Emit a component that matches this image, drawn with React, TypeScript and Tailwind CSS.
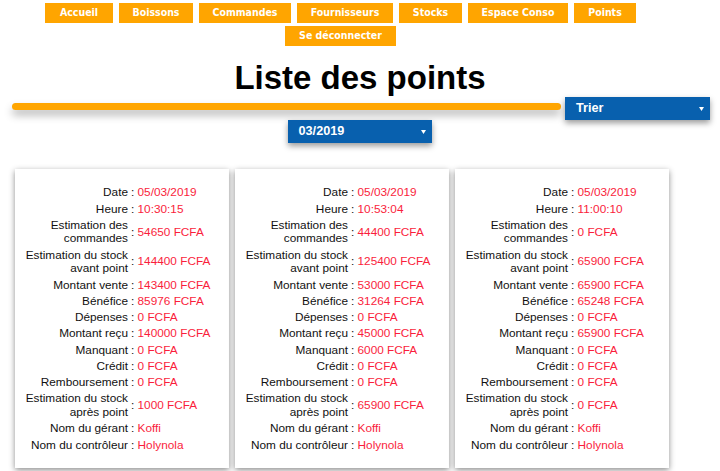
import React from "react";

type Row = { label: React.ReactNode; value: string; two?: boolean };

const navRow1 = [
  { t: "Accueil", w: "w-[68px]" },
  { t: "Boissons", w: "w-[74px]" },
  { t: "Commandes", w: "w-[92px]" },
  { t: "Fournisseurs", w: "w-[96px]" },
  { t: "Stocks", w: "w-[63px]" },
  { t: "Espace Conso", w: "w-[100px]" },
  { t: "Points", w: "w-[62px]" },
];

function mk(v: string[]): Row[] {
  return [
    { label: "Date", value: v[0] },
    { label: "Heure", value: v[1] },
    { label: <>Estimation des<br />commandes</>, value: v[2], two: true },
    { label: <>Estimation du stock<br />avant point</>, value: v[3], two: true },
    { label: "Montant vente", value: v[4] },
    { label: "Bénéfice", value: v[5] },
    { label: "Dépenses", value: v[6] },
    { label: "Montant reçu", value: v[7] },
    { label: "Manquant", value: v[8] },
    { label: "Crédit", value: v[9] },
    { label: "Remboursement", value: v[10] },
    { label: <>Estimation du stock<br />après point</>, value: v[11], two: true },
    { label: "Nom du gérant", value: v[12] },
    { label: "Nom du contrôleur", value: v[13] },
  ];
}

const cards: Row[][] = [
  mk(["05/03/2019", "10:30:15", "54650 FCFA", "144400 FCFA", "143400 FCFA", "85976 FCFA", "0 FCFA", "140000 FCFA", "0 FCFA", "0 FCFA", "0 FCFA", "1000 FCFA", "Koffi", "Holynola"]),
  mk(["05/03/2019", "10:53:04", "44400 FCFA", "125400 FCFA", "53000 FCFA", "31264 FCFA", "0 FCFA", "45000 FCFA", "6000 FCFA", "0 FCFA", "0 FCFA", "65900 FCFA", "Koffi", "Holynola"]),
  mk(["05/03/2019", "11:00:10", "0 FCFA", "65900 FCFA", "65900 FCFA", "65248 FCFA", "0 FCFA", "65900 FCFA", "0 FCFA", "0 FCFA", "0 FCFA", "0 FCFA", "Koffi", "Holynola"]),
];

function NavBtn({ t, w }: { t: string; w: string }) {
  return (
    <div
      className={`${w} h-[20px] bg-[#ffa500] text-white font-bold text-[10.5px] font-stretch-condensed font-['DejaVu_Sans_Condensed','DejaVu_Sans',sans-serif] flex items-center justify-center whitespace-nowrap`}
    >
      {t}
    </div>
  );
}

function Arrow() {
  return (
    <svg width="5" height="4" viewBox="0 0 5 4" className="block">
      <path d="M0 0 L5 0 L2.5 4 Z" fill="white" />
    </svg>
  );
}

function Select({ text, w }: { text: string; w: string }) {
  return (
    <div
      className={`${w} h-[23px] bg-[#0860ae] text-white font-bold text-[12.7px] font-['Liberation_Sans',Arial,sans-serif] flex items-center justify-between pl-[11px] pr-[6px] shadow-[0_3px_6px_rgba(0,0,0,0.4)]`}
    >
      <span>{text}</span>
      <Arrow />
    </div>
  );
}

function Card({ rows }: { rows: Row[] }) {
  return (
    <div className="w-[214px] h-[299px] bg-white shadow-[0_2px_6px_rgba(0,0,0,0.45)] pt-[16px] pl-[10px]">
      <table className="border-collapse text-[11.8px] leading-[13.5px] font-['Liberation_Sans',Arial,sans-serif]">
        <tbody>
          {rows.map((r, i) => (
            <tr key={i}>
              <td className="w-[106px] pr-[3px] py-[1.4px] text-right align-middle whitespace-nowrap text-[#111]">
                {r.label}
              </td>
              <td className="py-[1.4px] align-middle whitespace-nowrap">
                <span className="text-[#111]">: </span>
                <span className="text-[#fa1e3c]">{r.value}</span>
              </td>
            </tr>
          ))}
        </tbody>
      </table>
    </div>
  );
}

export default function App() {
  return (
    <div className="w-[720px] h-[471px] bg-white overflow-hidden relative">
      <div className="w-[681px] pt-[3px] flex flex-col items-center gap-[3px]">
        <div className="flex gap-[6px]">
          {navRow1.map((b) => (
            <NavBtn key={b.t} t={b.t} w={b.w} />
          ))}
        </div>
        <div className="flex">
          <NavBtn t="Se déconnecter" w="w-[111px]" />
        </div>
      </div>
      <h1 className="mt-[13px] text-center text-[33px] leading-[38px] font-bold text-black font-['Liberation_Sans',Arial,sans-serif]">
        Liste des points
      </h1>
      <div className="flex items-start pl-[12px]">
        <div className="w-[549px] h-[7px] mt-[6px] rounded-full bg-[#ffa500] shadow-[0_5px_8px_rgba(0,0,0,0.3)]" />
        <div className="ml-[4px]">
          <Select text="Trier" w="w-[145px]" />
        </div>
      </div>
      <div className="flex justify-center pr-[1px]">
        <Select text="03/2019" w="w-[144px]" />
      </div>
      <div className="flex gap-[6px] pl-[15px] mt-[26px]">
        {cards.map((c, i) => (
          <Card key={i} rows={c} />
        ))}
      </div>
    </div>
  );
}
